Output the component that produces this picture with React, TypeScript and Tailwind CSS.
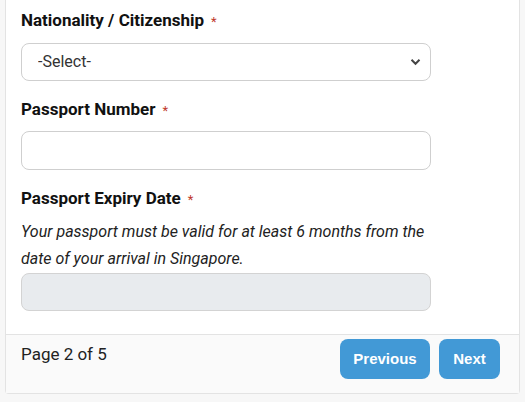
export default function App() {
  return (
    <div className="min-h-screen bg-[#f7f7f7] px-[5px] font-['Roboto',sans-serif] text-[#212121]">
      <div className="rounded-b-[4px] border border-t-0 border-[#e3e3e3] bg-white">
        <div className="px-[15px] pt-[8px] pb-[23px]">
          <Label text="Nationality / Citizenship" />
          <div className="relative mt-[9px] w-[410px]">
            <select className="h-[38px] w-full appearance-none rounded-[8px] border border-[#cfcfcf] bg-white pl-[16px] text-[16px] text-[#333] outline-none">
              <option>-Select-</option>
            </select>
            <svg
              className="pointer-events-none absolute right-[10px] top-[15px]"
              width="11"
              height="8"
              viewBox="0 0 11 8"
            >
              <path d="M1.5 1.8 L5.5 5.8 L9.5 1.8" fill="none" stroke="#444" strokeWidth="2" />
            </svg>
          </div>

          <div className="mt-[16px]">
            <Label text="Passport Number" />
          </div>
          <input
            type="text"
            className="mt-[8px] block h-[39px] w-[410px] rounded-[8px] border border-[#cfcfcf] bg-white px-3 text-[16px] outline-none"
          />

          <div className="mt-[16px]">
            <Label text="Passport Expiry Date" />
          </div>
          <p className="mt-[6px] text-[16px] italic leading-[27px] text-[#222]">
            Your passport must be valid for at least 6 months from the
            <br />
            date of your arrival in Singapore.
          </p>
          <input
            type="text"
            disabled
            className="mt-[1px] block h-[38px] w-[410px] rounded-[8px] border border-[#d3d3d3] bg-[#e8ebee] px-3 text-[16px] outline-none"
          />
        </div>

        <div className="flex items-start justify-between border-t border-[#e3e3e3] bg-[#fafafa] pb-[14px] pl-[15px] pr-[19px] pt-[4px]">
          <span className="pt-[3px] text-[17px] leading-[24px] text-[#222]">Page 2 of 5</span>
          <div className="flex gap-[9px] font-['Liberation_Sans',Arial,sans-serif]">
            <button className="h-[40px] w-[90px] rounded-[8px] bg-[#4299d6] text-[15px] font-bold text-white">
              Previous
            </button>
            <button className="h-[40px] w-[61px] rounded-[8px] bg-[#4299d6] text-[15px] font-bold text-white">
              Next
            </button>
          </div>
        </div>
      </div>
    </div>
  );
}

function Label({ text }: { text: string }) {
  return (
    <label className="block text-[17px] font-bold leading-[24px] text-[#111]">
      {text}
      <span className="ml-[7px] text-[13px] font-normal text-[#c0392b]">*</span>
    </label>
  );
}
